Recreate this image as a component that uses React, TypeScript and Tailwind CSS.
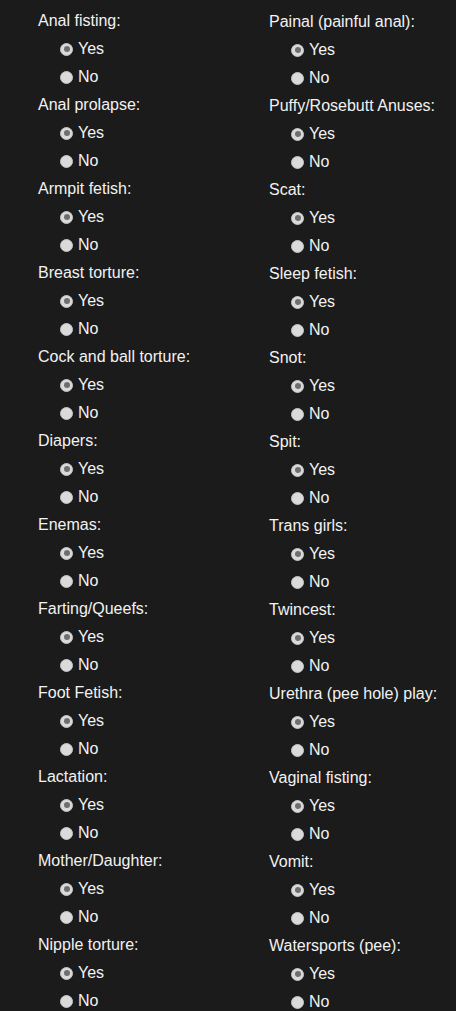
const LEFT = [
  'Anal fisting:',
  'Anal prolapse:',
  'Armpit fetish:',
  'Breast torture:',
  'Cock and ball torture:',
  'Diapers:',
  'Enemas:',
  'Farting/Queefs:',
  'Foot Fetish:',
  'Lactation:',
  'Mother/Daughter:',
  'Nipple torture:',
]

const RIGHT = [
  'Painal (painful anal):',
  'Puffy/Rosebutt Anuses:',
  'Scat:',
  'Sleep fetish:',
  'Snot:',
  'Spit:',
  'Trans girls:',
  'Twincest:',
  'Urethra (pee hole) play:',
  'Vaginal fisting:',
  'Vomit:',
  'Watersports (pee):',
]

function Radio({ checked, label }: { checked?: boolean; label: string }) {
  return (
    <label className="flex h-7 items-center pl-[22px]">
      <span className="flex size-[13px] flex-none items-center justify-center rounded-full border border-[#c4c4c4] bg-[#dadada]">
        {checked && <span className="size-[6px] rounded-full bg-[#6e6e6e]" />}
      </span>
      <span className="ml-[5px]">{label}</span>
    </label>
  )
}

function Field({ label }: { label: string }) {
  return (
    <div>
      <div className="flex h-7 items-center">{label}</div>
      <Radio checked label="Yes" />
      <Radio label="No" />
    </div>
  )
}

export default function App() {
  return (
    <div className="min-h-screen overflow-hidden bg-[#1b1b1b] pl-[38px] pt-[7px] font-['Liberation_Sans',Arial,sans-serif] text-[16px] text-[#f2f2f2]">
      <div className="grid grid-cols-[231px_1fr]">
        <div>
          {LEFT.map((l) => (
            <Field key={l} label={l} />
          ))}
        </div>
        <div className="pt-px">
          {RIGHT.map((l) => (
            <Field key={l} label={l} />
          ))}
        </div>
      </div>
    </div>
  )
}
